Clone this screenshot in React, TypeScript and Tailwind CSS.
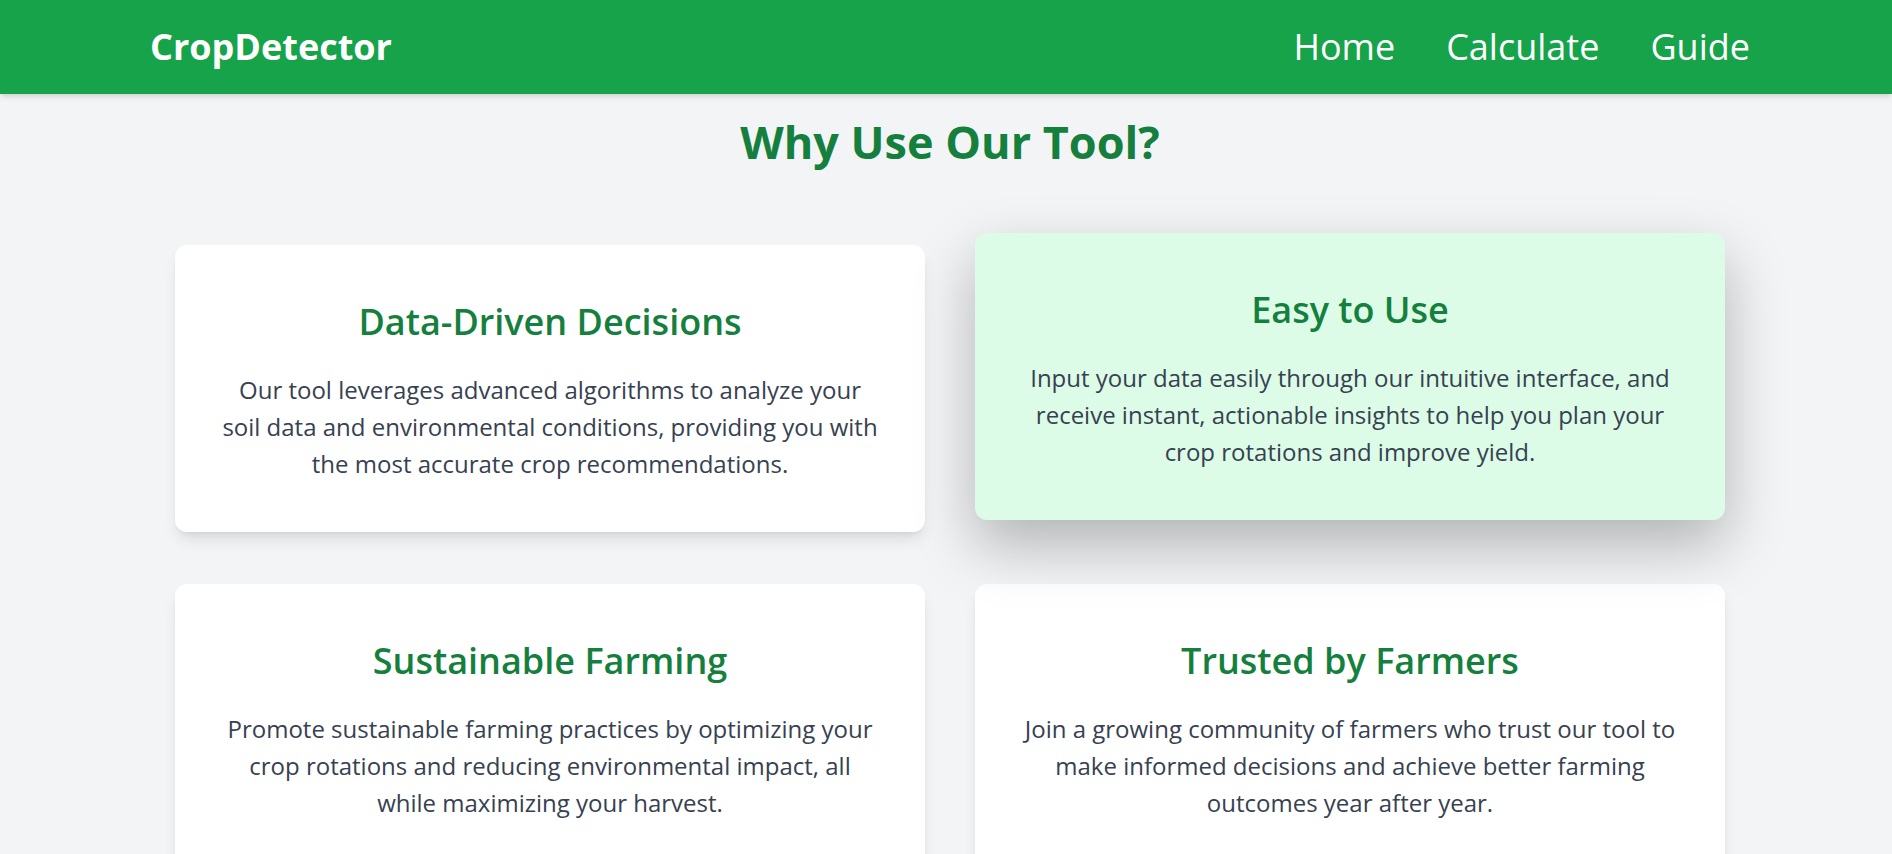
const features = [
  {
    title: "Data-Driven Decisions",
    text: "Our tool leverages advanced algorithms to analyze your soil data and environmental conditions, providing you with the most accurate crop recommendations.",
    active: false,
  },
  {
    title: "Easy to Use",
    text: "Input your data easily through our intuitive interface, and receive instant, actionable insights to help you plan your crop rotations and improve yield.",
    active: true,
  },
  {
    title: "Sustainable Farming",
    text: "Promote sustainable farming practices by optimizing your crop rotations and reducing environmental impact, all while maximizing your harvest.",
    active: false,
  },
  {
    title: "Trusted by Farmers",
    text: "Join a growing community of farmers who trust our tool to make informed decisions and achieve better farming outcomes year after year.",
    active: false,
  },
];

export default function App() {
  return (
    <div
      className="min-h-screen bg-[#f3f4f6]"
      style={{ fontFamily: '"Segoe UI", "Open Sans", "Noto Sans", sans-serif' }}
    >
      <header className="relative z-10 flex h-[94px] items-center justify-between bg-[#16a34a] pl-[150px] pr-[142px] shadow-md">
        <h1 className="text-[36px] font-bold text-white">CropDetector</h1>
        <nav className="flex gap-[51px] text-[36px] text-white">
          <a href="#">Home</a>
          <a href="#">Calculate</a>
          <a href="#">Guide</a>
        </nav>
      </header>

      <main className="pl-[175px] pr-[167px]">
        <h2 className="pt-[24px] text-center text-[45px] font-bold leading-[48px] text-[#15803d]">
          Why Use Our Tool?
        </h2>

        <section className="mt-[79px] grid grid-cols-2 gap-x-[50px] gap-y-[52px]">
          {features.map((f) => (
            <div
              key={f.title}
              className={
                f.active
                  ? "-translate-y-3 rounded-xl bg-[#dcfce7] px-[45px] pb-[50px] pt-[57px] text-center shadow-[0_25px_60px_rgba(0,0,0,0.27)]"
                  : "rounded-xl bg-white px-[45px] pb-[50px] pt-[57px] text-center shadow-lg"
              }
            >
              <h3 className="text-[36px] font-semibold leading-[40px] text-[#15803d]">
                {f.title}
              </h3>
              <p className="mt-[29px] text-[24px] leading-[37px] text-[#374151]">
                {f.text}
              </p>
            </div>
          ))}
        </section>
      </main>
    </div>
  );
}
